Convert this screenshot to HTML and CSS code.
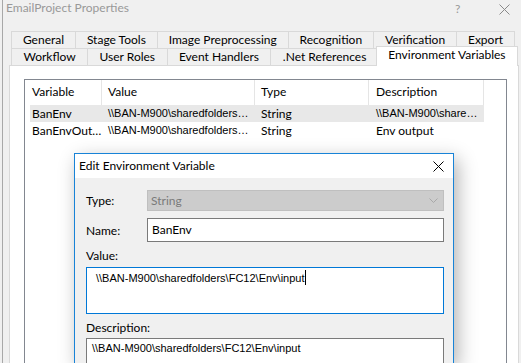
FILE: index.html
```html
<!DOCTYPE html>
<html lang="en">
<head>
    <meta charset="UTF-8">
    <title>EmailProject Properties</title>
    <link rel="stylesheet" href="styles.css">
</head>
<body>
    <div class="window">
        <div class="titlebar">
            <span class="title">EmailProject Properties</span>
            <span class="help">?</span>
            <svg class="win-close" width="11" height="11" viewBox="0 0 11 11">
                <path d="M0.5 0.5 L10.5 10.5 M10.5 0.5 L0.5 10.5" stroke="#8a8a8a" stroke-width="1" fill="none"/>
            </svg>
        </div>

        <div class="tabs">
            <div class="tab-row">
                <div class="tab">General</div>
                <div class="tab">Stage Tools</div>
                <div class="tab">Image Preprocessing</div>
                <div class="tab">Recognition</div>
                <div class="tab">Verification</div>
                <div class="tab">Export</div>
            </div>
            <div class="tab-row second">
                <div class="tab">Workflow</div>
                <div class="tab">User Roles</div>
                <div class="tab">Event Handlers</div>
                <div class="tab">.Net References</div>
                <div class="tab active">Environment Variables</div>
            </div>
        </div>

        <div class="panel">
            <div class="listview">
                <div class="lv-header">
                    <div class="col c1">Variable</div>
                    <div class="col c2">Value</div>
                    <div class="col c3">Type</div>
                    <div class="col c4">Description</div>
                </div>
                <div class="lv-row selected">
                    <div class="col c1">BanEnv</div>
                    <div class="col c2 path">\\BAN-M900\sharedfolders…</div>
                    <div class="col c3">String</div>
                    <div class="col c4 path">\\BAN-M900\share…</div>
                </div>
                <div class="lv-row">
                    <div class="col c1">BanEnvOut…</div>
                    <div class="col c2 path">\\BAN-M900\sharedfolders…</div>
                    <div class="col c3">String</div>
                    <div class="col c4">Env output</div>
                </div>
            </div>
        </div>
    </div>

    <div class="dialog">
        <div class="dlg-title">
            <span>Edit Environment Variable</span>
            <svg class="dlg-close" width="11" height="11" viewBox="0 0 11 11">
                <path d="M0.5 0.5 L10.5 10.5 M10.5 0.5 L0.5 10.5" stroke="#000" stroke-width="1" fill="none"/>
            </svg>
        </div>
        <div class="dlg-body">
            <div class="field-row">
                <label>Type:</label>
                <div class="combo">
                    <span>String</span>
                    <svg width="9" height="5" viewBox="0 0 9 5">
                        <path d="M0.5 0.5 L4.5 4.5 L8.5 0.5" stroke="#a8a8a8" stroke-width="1" fill="none"/>
                    </svg>
                </div>
            </div>
            <div class="field-row">
                <label>Name:</label>
                <div class="textbox">BanEnv</div>
            </div>
            <label class="block-label">Value:</label>
            <div class="memo focused"><span class="path">\\BAN-M900\sharedfolders\FC12\Env\input</span><span class="caret"></span></div>
            <label class="block-label desc">Description:</label>
            <div class="memo desc-box"><span class="path">\\BAN-M900\sharedfolders\FC12\Env\input</span></div>
        </div>
    </div>
</body>
</html>
```

FILE: styles.css
```css
* {
    margin: 0;
    padding: 0;
    box-sizing: border-box;
}

body {
    width: 521px;
    height: 363px;
    overflow: hidden;
    position: relative;
    background-color: #f0f0f0;
    font-family: 'Lato', sans-serif;
    font-size: 12px;
    color: #000;
}

/* paths are set narrower so they fit like the original */
.path {
    font-family: 'Liberation Sans', Arial, sans-serif;
    font-size: 11px;
}

.window {
    height: 363px;
    margin-left: 2px;
    border-left: 1px solid #a8a8a8;
    overflow: hidden;
}

.titlebar {
    height: 31px;
    position: relative;
}

.title {
    position: absolute;
    left: 3px;
    top: 0;
    line-height: 16px;
    color: #999;
}

.help {
    position: absolute;
    left: 452px;
    top: 2px;
    line-height: 14px;
    color: #999;
}

.win-close {
    position: absolute;
    left: 496px;
    top: 4px;
}

/* tabs */
.tabs {
    padding-left: 8px;
}

.tab-row {
    display: flex;
    height: 17px;
    width: 504px;
}

.tab-row.second {
    width: 505px;
}

.tab {
    flex: 1 1 auto;
    text-align: center;
    line-height: 16px;
    white-space: nowrap;
    border: 1px solid #d9d9d9;
    border-bottom: none;
    border-right: none;
    background-color: #f0f0f0;
}

.tab:last-child {
    border-right: 1px solid #d9d9d9;
}

.tab.active {
    position: relative;
    z-index: 1;
    margin-top: -2px;
    margin-left: -2px;
    margin-right: -2px;
    height: 20px;
    background-color: #fff;
    border-color: #d9d9d9;
}

.panel {
    margin-left: 6px;
    width: 510px;
    height: 298px;
    background-color: #fff;
    border: 1px solid #d9d9d9;
    border-bottom: none;
    padding: 13px 0 0 14px;
}

/* list view */
.listview {
    width: 483px;
    height: 285px;
    border: 1px solid #828790;
    border-bottom: none;
    padding-left: 5px;
}

.lv-header {
    display: flex;
    height: 25px;
    line-height: 24px;
}

.lv-header .col {
    border-right: 1px solid #e5e5e5;
}

.lv-row {
    display: flex;
    height: 17px;
    line-height: 17px;
    width: 454px;
}

.lv-row.selected {
    background-color: #e8e8e8;
}

.col {
    white-space: nowrap;
    overflow: hidden;
    padding-left: 6px;
}

.c1 { width: 72px; padding-left: 2px; }
.c2 { width: 153px; }
.c3 { width: 114px; }
.c4 { width: 115px; padding-left: 7px; }

/* dialog over the list */
.dialog {
    position: absolute;
    left: 74px;
    top: 153px;
    width: 380px;
    height: 210px;
    border: 1px solid #1883d7;
    border-bottom: none;
    background-color: #f0f0f0;
    box-shadow: 4px 6px 18px rgba(0, 0, 0, 0.3);
    overflow: hidden;
}

.dlg-title {
    height: 24px;
    background-color: #fff;
    position: relative;
    padding-left: 4px;
    line-height: 24px;
}

.dlg-close {
    position: absolute;
    left: 358px;
    top: 7px;
}

.dlg-body {
    padding: 12px 9px 0 11px;
}

.field-row {
    display: flex;
    align-items: center;
    margin-bottom: 7px;
}

.field-row label {
    width: 61px;
}

.combo {
    flex: 1;
    height: 21px;
    background-color: #cccccc;
    border: 1px solid #bfbfbf;
    color: #7a7a7a;
    padding: 0 5px 0 3px;
    display: flex;
    align-items: center;
    justify-content: space-between;
}

.textbox {
    flex: 1;
    height: 24px;
    line-height: 22px;
    background-color: #fff;
    border: 1px solid #7a7a7a;
    padding-left: 4px;
}

.block-label {
    display: block;
    line-height: 15px;
    margin-top: -1px;
    margin-bottom: 4px;
}

.block-label.desc {
    margin-top: 6px;
    margin-bottom: 3px;
}

.memo {
    height: 47px;
    background-color: #fff;
    border: 1px solid #7a7a7a;
    padding: 1px 0 0 5px;
    line-height: 16px;
    white-space: nowrap;
}

.memo.desc-box {
    height: 26px;
    border-bottom: none;
}

.memo.focused {
    border-color: #0078d7;
    padding-left: 9px;
    padding-top: 2px;
}

.caret {
    display: inline-block;
    width: 1px;
    height: 15px;
    background-color: #000;
    vertical-align: -3px;
}
```
